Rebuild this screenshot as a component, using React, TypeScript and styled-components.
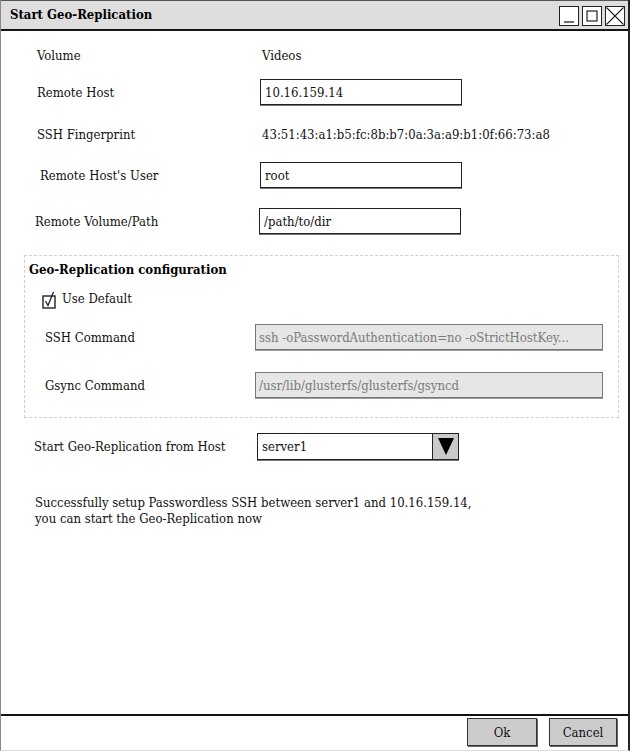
import React from "react"
import styled, { createGlobalStyle } from "styled-components"

const GlobalStyle = createGlobalStyle`
	html, body {
		margin: 0;
		padding: 0;
		background: #fff;
	}
	body {
		font-family: "DejaVu Serif Condensed", "DejaVu Serif", serif;
		font-stretch: condensed;
		font-size: 13px;
		color: #111;
	}
`

const Window = styled.div`
	box-sizing: border-box;
	width: 630px;
	height: 751px;
	display: flex;
	flex-direction: column;
	border-left: 1px solid #888;
	border-right: 2px solid #222;
	border-bottom: 1px solid #ddd;
	background: #fff;
`

const TitleBar = styled.div`
	box-sizing: border-box;
	height: 31px;
	display: flex;
	align-items: center;
	justify-content: space-between;
	padding: 0 3px 2px 9px;
	background: #dedede;
	border-top: 1px solid #555;
	border-bottom: 2px solid #151515;
`

const Title = styled.div`
	font-weight: bold;
	font-size: 13px;
	color: #000;
`

const WinButtons = styled.div`
	display: flex;
	gap: 3px;
	margin-top: 3px;
`

const WinButton = styled.div`
	box-sizing: border-box;
	width: 20px;
	height: 20px;
	background: #fff;
	border: 1px solid #222;
	display: flex;
	align-items: center;
	justify-content: center;
`

const Content = styled.div`
	flex: 1;
	padding: 11px 0 0 0;
	display: flex;
	flex-direction: column;
`

const Row = styled.div<{ $mt?: number }>`
	display: flex;
	align-items: center;
	height: 26px;
	margin-top: ${(p) => p.$mt ?? 0}px;
`

const Label = styled.div<{ $pl: number; $w: number }>`
	box-sizing: border-box;
	padding-left: ${(p) => p.$pl}px;
	width: ${(p) => p.$w}px;
	flex-shrink: 0;
	color: #111;
`

const Value = styled.div`
	color: #111;
	margin-left: 2px;
`

const TextInput = styled.div<{ $w?: number; $disabled?: boolean }>`
	box-sizing: border-box;
	width: ${(p) => p.$w ?? 202}px;
	height: 26px;
	display: flex;
	align-items: center;
	padding-left: ${(p) => (p.$disabled ? 3 : 4)}px;
	border: 1px solid ${(p) => (p.$disabled ? "#777" : "#222")};
	box-shadow: 0 1px 0 ${(p) => (p.$disabled ? "#999" : "#777")};
	background: ${(p) => (p.$disabled ? "#e6e6e6" : "#fff")};
	color: ${(p) => (p.$disabled ? "#7a7a7a" : "#111")};
	white-space: nowrap;
	overflow: hidden;
`

const ConfigBox = styled.div`
	box-sizing: border-box;
	margin: 21px 0 0 23px;
	width: 595px;
	height: 163px;
	border: 1px dashed #cfcfcf;
	padding: 4px 0 0 4px;
	display: flex;
	flex-direction: column;
`

const BoxTitle = styled.div`
	font-weight: bold;
	color: #000;
	height: 20px;
	line-height: 20px;
`

const CheckRow = styled.div`
	display: flex;
	align-items: flex-end;
	gap: 4px;
	margin: 4px 0 0 13px;
	height: 26px;
`

const CheckLabel = styled.span`
	padding-bottom: 4px;
`

const Select = styled.div`
	box-sizing: border-box;
	width: 202px;
	height: 27px;
	display: flex;
	border: 1px solid #222;
	box-shadow: 0 1px 0 #777;
	background: #fff;
`

const SelectText = styled.div`
	flex: 1;
	display: flex;
	align-items: center;
	padding-left: 4px;
`

const SelectArrow = styled.div`
	width: 25px;
	background: #cacaca;
	border-left: 1px solid #222;
	display: flex;
	align-items: center;
	justify-content: center;
`

const Message = styled.div`
	margin: 36px 0 0 34px;
	line-height: 16px;
	color: #111;
`

const Footer = styled.div`
	box-sizing: border-box;
	height: 36px;
	border-top: 2px solid #111;
	display: flex;
	justify-content: flex-end;
	align-items: flex-start;
	gap: 12px;
	padding: 2px 11px 0 0;
`

const Button = styled.div<{ $w: number }>`
	box-sizing: border-box;
	width: ${(p) => p.$w}px;
	height: 28px;
	background: #cccccc;
	border: 1px solid #333;
	box-shadow: 1px 1px 0 #666;
	display: flex;
	align-items: center;
	justify-content: center;
	color: #111;
`

const App: React.FC = () => {
	return (
		<>
			<GlobalStyle />
			<Window>
				<TitleBar>
					<Title>Start Geo-Replication</Title>
					<WinButtons>
						<WinButton>
							<svg width="18" height="18" viewBox="0 0 18 18">
								<line x1="4" y1="15" x2="14" y2="15" stroke="#222" strokeWidth="1.3" />
							</svg>
						</WinButton>
						<WinButton>
							<svg width="18" height="18" viewBox="0 0 18 18">
								<rect x="4" y="4" width="10" height="10" fill="none" stroke="#222" strokeWidth="1.2" />
							</svg>
						</WinButton>
						<WinButton>
							<svg width="18" height="18" viewBox="0 0 18 18">
								<line x1="0.5" y1="0.5" x2="17.5" y2="17.5" stroke="#222" strokeWidth="1.1" />
								<line x1="17.5" y1="0.5" x2="0.5" y2="17.5" stroke="#222" strokeWidth="1.1" />
							</svg>
						</WinButton>
					</WinButtons>
				</TitleBar>

				<Content>
					<Row>
						<Label $pl={36} $w={259}>Volume</Label>
						<Value>Videos</Value>
					</Row>
					<Row $mt={11}>
						<Label $pl={36} $w={259}>Remote Host</Label>
						<TextInput>10.16.159.14</TextInput>
					</Row>
					<Row $mt={16}>
						<Label $pl={36} $w={259}>SSH Fingerprint</Label>
						<Value>43:51:43:a1:b5:fc:8b:b7:0a:3a:a9:b1:0f:66:73:a8</Value>
					</Row>
					<Row $mt={15}>
						<Label $pl={39} $w={259}>Remote Host's User</Label>
						<TextInput>root</TextInput>
					</Row>
					<Row $mt={20}>
						<Label $pl={34} $w={258}>Remote Volume/Path</Label>
						<TextInput>/path/to/dir</TextInput>
					</Row>

					<ConfigBox>
						<BoxTitle>Geo-Replication configuration</BoxTitle>
						<CheckRow>
							<svg width="16" height="20" viewBox="0 0 16 20">
								<rect x="1" y="6" width="12" height="12" fill="none" stroke="#222" strokeWidth="1.4" />
								<polyline points="3.5,11 6,15.5 11.5,2" fill="none" stroke="#222" strokeWidth="1.3" />
							</svg>
							<CheckLabel>Use Default</CheckLabel>
						</CheckRow>
						<Row $mt={14}>
							<Label $pl={16} $w={226}>SSH Command</Label>
							<TextInput $w={348} $disabled>
								ssh -oPasswordAuthentication=no -oStrictHostKey...
							</TextInput>
						</Row>
						<Row $mt={22}>
							<Label $pl={16} $w={226}>Gsync Command</Label>
							<TextInput $w={348} $disabled>
								/usr/lib/glusterfs/glusterfs/gsyncd
							</TextInput>
						</Row>
					</ConfigBox>

					<Row $mt={15}>
						<Label $pl={33} $w={256}>Start Geo-Replication from Host</Label>
						<Select>
							<SelectText>server1</SelectText>
							<SelectArrow>
								<svg width="18" height="20" viewBox="0 0 18 20">
									<polygon points="1,2 17,2 9,19" fill="#000" />
								</svg>
							</SelectArrow>
						</Select>
					</Row>

					<Message>
						Successfully setup Passwordless SSH between server1 and 10.16.159.14,
						<br />
						you can start the Geo-Replication now
					</Message>
				</Content>

				<Footer>
					<Button $w={70}>Ok</Button>
					<Button $w={68}>Cancel</Button>
				</Footer>
			</Window>
		</>
	)
}

export default App
